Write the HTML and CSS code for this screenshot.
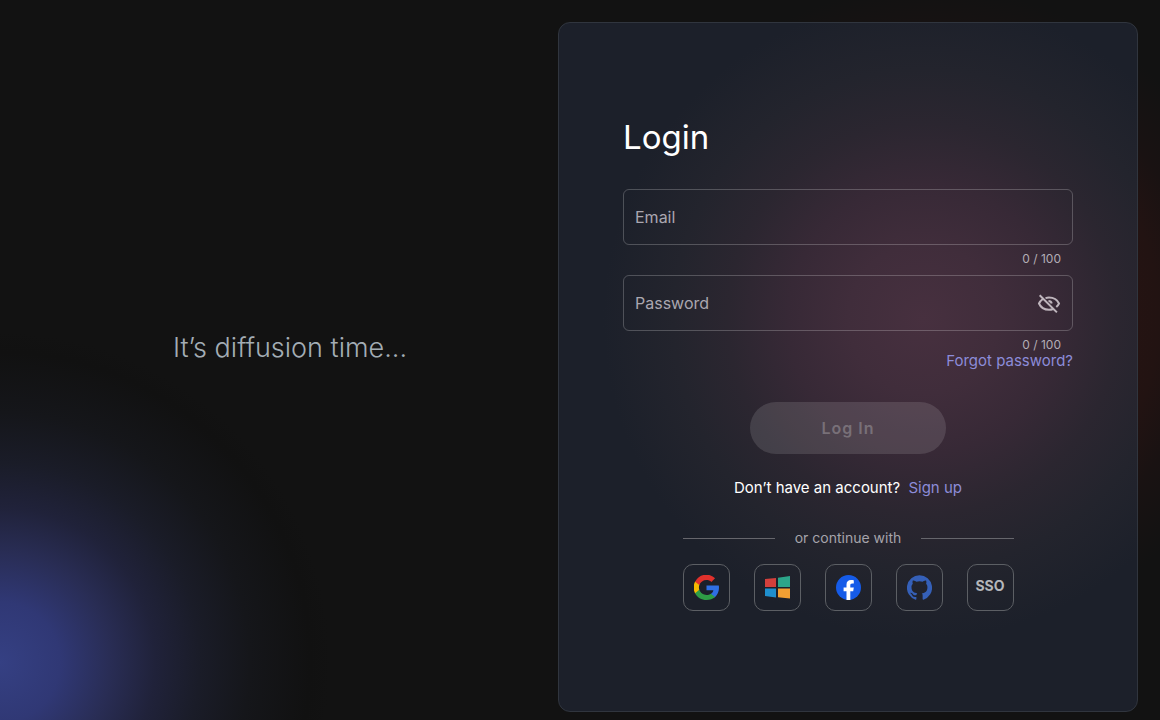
FILE: index.html
```html
<!DOCTYPE html>
<html lang="en">
<head>
	<meta charset="utf-8">
	<meta name="viewport" content="width=device-width, initial-scale=1">
	<title>Login</title>
	<link rel="stylesheet" href="styles.css">
</head>

<body>
	<main class="page">
		<section class="hero">
			<p class="tagline">It’s diffusion time...</p>
		</section>

		<section class="card">
			<h1>Login</h1>
			<form>
				<div class="field">
					<input type="email" id="email" maxlength="100">
					<label for="email">Email</label>
				</div>
				<div class="counter">0 / 100</div>

				<div class="field">
					<input type="password" id="password" maxlength="100">
					<label for="password">Password</label>
					<button type="button" class="toggle" aria-label="Show password">
						<svg viewBox="0 0 24 24" width="24" height="24" fill="none" stroke="currentColor" stroke-width="2">
							<path d="M8.5 6.1A11 11 0 0 1 12 5.500c4.500 0 8.300 2.400 10 6-.6 1.300-1.500 2.500-2.700 3.500M5.500 7.200A10.500 10.500 0 0 0 2 11.500c1.700 3.900 5.500 6.300 10 6.300 1.500 0 2.900-.3 4.200-.8M2.700 3.200l17.200 17.200"/>
							<path d="M11.500 9c1.700 0 2.900 1 3.200 2.500"/>
						</svg>
					</button>
				</div>
				<div class="counter">0 / 100</div>

				<a class="forgot" href="#">Forgot password?</a>
				<button type="submit" class="submit" disabled>Log In</button>
			</form>

			<p class="signup">Don’t have an account? <a href="#">Sign up</a></p>

			<div class="social">
				<div class="divider">or continue with</div>
				<div class="providers">
					<button type="button" aria-label="Google">
						<svg viewBox="0 0 24 24" width="25" height="25">
							<path fill="#2f6fe4" d="M24 12.3c0-.9-.1-1.6-.2-2.3H12v4.6h6.6c-.3 1.5-1.2 2.8-2.5 3.7v3.1h4c2.4-2.2 3.9-5.4 3.9-9.1z"/>
							<path fill="#2e9d46" d="M12 24c3.3 0 6.2-1.1 8.2-2.9l-4-3.1c-1.1.7-2.5 1.2-4.2 1.2-3.2 0-5.9-2.1-6.9-5H1v3.2C3 21.3 7.2 24 12 24z"/>
							<path fill="#f5b800" d="M5.1 14.2a7.2 7.2 0 0 1 0-4.5V6.500H1a12 12 0 0 0 0 10.900z"/>
							<path fill="#e0312c" d="M12 4.800c1.800 0 3.400.6 4.700 1.800l3.500-3.500A12 12 0 0 0 1 6.500l4.100 3.200c1-2.900 3.700-4.900 6.900-4.900z"/>
						</svg>
					</button>
					<button type="button" aria-label="Microsoft">
						<svg viewBox="0 0 25 25" width="25" height="25">
							<path fill="#d3403c" d="M0 4l11-1v9H0z"/>
							<path fill="#2ca58a" d="M13 2.700L25 1v11H13z"/>
							<path fill="#1f8fce" d="M0 13.500h11v9L0 21z"/>
							<path fill="#f29f33" d="M13 13.500h12v10l-12-1.300z"/>
						</svg>
					</button>
					<button type="button" aria-label="Facebook">
						<svg viewBox="0 0 25 25" width="25" height="25">
							<circle cx="12.5" cy="12.5" r="12.5" fill="#155be8"/>
							<path fill="#fff" d="M10.500 25v-8.700H7.600v-3.800h2.900V9.600c0-3.200 1.700-4.700 4.500-4.700 1.200 0 2.300.2 2.800.3v3.200h-1.600c-1.500 0-1.900.8-1.900 1.900v2.200h3.500l-.6 3.800h-2.900V25z"/>
						</svg>
					</button>
					<button type="button" aria-label="GitHub">
						<svg viewBox="0 0 24 24" width="25" height="25">
							<path fill="#3560b8" d="M12 .3a12 12 0 0 0-3.800 23.400c.6.1.8-.3.800-.6v-2c-3.300.7-4-1.600-4-1.600-.6-1.400-1.400-1.800-1.400-1.800-1-.7.1-.7.100-.7 1.200 0 1.900 1.200 1.900 1.200 1 1.800 2.800 1.300 3.500 1 0-.8.400-1.300.7-1.600-2.700-.3-5.500-1.300-5.500-6 0-1.200.5-2.300 1.300-3.100-.2-.4-.6-1.600 0-3.200 0 0 1-.3 3.400 1.200a11.500 11.500 0 0 1 6 0c2.300-1.500 3.300-1.200 3.300-1.200.6 1.600.2 2.800 0 3.200.9.800 1.300 1.900 1.300 3.200 0 4.600-2.800 5.600-5.500 5.900.5.400.9 1 .9 2.200v3.300c0 .3.100.7.800.6A12 12 0 0 0 12 .3"/>
						</svg>
					</button>
					<button type="button" class="sso">SSO</button>
				</div>
			</div>
		</section>
	</main>
</body>

</html>
```
FILE: styles.css
```css
* {
	box-sizing: border-box;
}

body {
	margin: 0;
	background: #121212;
	color: #fff;
	font-family: Inter, "Liberation Sans", sans-serif;
	font-size: 15px;
	line-height: 20px;
}

a {
	color: #8c8cd9;
	text-decoration: none;
}

button {
	font: inherit;
	padding: 0;
	border: 0;
	background: none;
	cursor: pointer;
}

svg {
	display: block;
}

.page {
	display: flex;
	min-height: 100vh;
	padding: 22px 22px 8px;
	background:
		radial-gradient(circle at 0 92%, #354083 0, #303875 60px, #292d55 110px, #20223a 155px, #1a1c28 200px, #15161a 250px, #111111 310px, transparent 330px),
		radial-gradient(circle at 80% 44%, #3a1614 0, #221312 230px, #191212 270px, #121212 330px);
}

.hero {
	flex: 1;
	display: flex;
	align-items: center;
	justify-content: center;
	padding-bottom: 38px;
}

.tagline {
	margin: 0;
	color: #a3adb5;
	font-size: 27px;
	font-weight: 300;
	line-height: 32px;
}

.card {
	width: 50vw;
	display: flex;
	flex-direction: column;
	justify-content: center;
	padding: 0 64px 6px;
	border: 1px solid #30353e;
	border-radius: 12px;
	background: radial-gradient(circle at 63% 43%, #47303f 0, #402d3b 75px, #372936 135px, #2b2630 195px, #23242d 250px, #1c202a 320px);
}

h1 {
	margin: 0 0 32px;
	font-size: 33px;
	font-weight: 400;
	line-height: 40px;
}

form {
	display: flex;
	flex-direction: column;
}

.field {
	position: relative;
	display: flex;
}

.field input {
	flex: 1;
	min-width: 0;
	height: 56px;
	padding: 0 48px 0 11px;
	border: 1px solid rgba(255, 255, 255, 0.22);
	border-radius: 6px;
	background: none;
	color: #fff;
	font: inherit;
}

/* label rests inside the empty box */
.field label {
	position: absolute;
	top: 18px;
	left: 12px;
	color: #aaa7b0;
	font-size: 16px;
}

.toggle {
	position: absolute;
	top: 17px;
	right: 12px;
	color: #beb5bc;
}

.counter {
	height: 30px;
	padding: 4px 12px 0;
	color: #b3adb5;
	font-size: 12px;
	text-align: right;
}

.counter + .forgot {
	align-self: flex-end;
	margin-top: -10px;
}

.submit {
	align-self: center;
	width: 196px;
	height: 52px;
	margin-top: 31px;
	border-radius: 26px;
	background: rgba(255, 255, 255, 0.12);
	color: #787078;
	font-size: 16px;
	font-weight: 600;
	letter-spacing: 1px;
}

.signup {
	margin: 24px 0 30px;
	text-align: center;
}

.signup a {
	margin-left: 4px;
}

.social {
	align-self: center;
}

.divider {
	display: flex;
	align-items: center;
	gap: 20px;
	margin-bottom: 16px;
	color: #a6a4ab;
	font-size: 14px;
}

.divider::before,
.divider::after {
	content: "";
	flex: 1;
	height: 1px;
	background: #66666c;
}

.providers {
	display: flex;
	gap: 24px;
}

.providers button {
	display: flex;
	align-items: center;
	justify-content: center;
	width: 47px;
	height: 47px;
	border: 1px solid #5c5f64;
	border-radius: 10px;
}

.providers .sso {
	padding-bottom: 4px;
	color: #b5b7bb;
	font-size: 14px;
	font-weight: 700;
}
```
